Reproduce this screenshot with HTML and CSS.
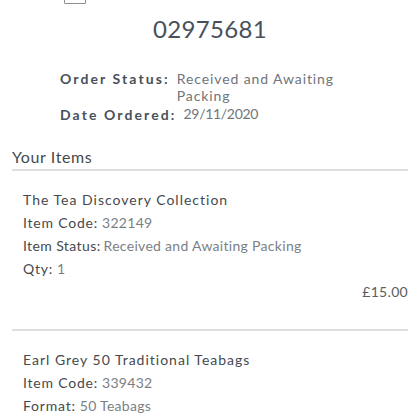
FILE: index.html
```html
<!DOCTYPE html>
<html lang="en">
<head>
    <meta charset="UTF-8">
    <meta name="viewport" content="width=device-width, initial-scale=1.0">
    <title>Order 02975681</title>
    <link rel="stylesheet" href="styles.css">
</head>
<body>

    <div class="top-box"></div>

    <h1 class="order-number">02975681</h1>

    <div class="order-info">
        <div class="info-row">
            <span class="info-label">Order Status:</span>
            <span class="info-value">Received and Awaiting Packing</span>
        </div>
        <div class="info-row">
            <span class="info-label">Date Ordered:</span>
            <span class="info-value date">29/11/2020</span>
        </div>
    </div>

    <h2 class="section-title">Your Items</h2>

    <div class="item">
        <p class="item-name">The Tea Discovery Collection</p>
        <p class="item-line"><span class="item-label">Item Code:</span> 322149</p>
        <p class="item-line"><span class="item-label tight">Item Status:</span>Received and Awaiting Packing</p>
        <p class="item-line"><span class="item-label">Qty:</span> 1</p>
        <p class="item-price">£15.00</p>
    </div>

    <div class="item">
        <p class="item-name">Earl Grey 50 Traditional Teabags</p>
        <p class="item-line"><span class="item-label">Item Code:</span> 339432</p>
        <p class="item-line"><span class="item-label">Format:</span> 50 Teabags</p>
    </div>

</body>
</html>
```

FILE: styles.css
```css
body {
    font-family: 'Lato', sans-serif;
    background-color: #ffffff;
    color: #4a4f55;
    margin: 0;
    padding: 0 12px;
}
.top-box {
    width: 20px;
    height: 20px;
    margin: -18px 0 0 52px;
    border: 1px solid #8a8f94;
    border-radius: 1px;
}
.order-number {
    margin: 10px 0 0;
    text-align: center;
    font-size: 24px;
    font-weight: 400;
    letter-spacing: 0.3px;
    color: #48515b;
}
.order-info {
    margin-top: 27px;
}
.info-row {
    display: flex;
    gap: 7px;
    margin: 0 0 2px 48px;
    line-height: 17px;
}
.info-label {
    font-weight: 700;
    font-size: 14px;
    letter-spacing: 2.1px;
    color: #48515b;
    white-space: nowrap;
}
.info-value {
    font-size: 14px;
    letter-spacing: 0.9px;
    color: #6f747a;
    max-width: 175px;
}
.info-value.date {
    letter-spacing: -0.3px;
    margin-top: -1px;
}
.section-title {
    margin: 24px 0 0;
    padding: 0 0 3px;
    font-size: 16px;
    font-weight: 400;
    letter-spacing: 0.6px;
    color: #46494d;
    border-bottom: 2px solid #dcdfe2;
}
.item {
    padding: 17px 0 0 11px;
    border-bottom: 2px solid #dcdfe2;
}
.item:last-child {
    border-bottom: none;
}
.item p {
    margin: 0;
    font-size: 14px;
    line-height: 23px;
    letter-spacing: 0.3px;
}
.item-name {
    color: #46494d;
    letter-spacing: 1px !important;
}
.item-line {
    color: #7b7f84;
}
.item-label {
    color: #46494d;
    letter-spacing: 0.8px;
}
.tight {
    margin-right: 3px;
    letter-spacing: 0.4px;
}
.item-price {
    text-align: right;
    color: #5a5e63;
    padding-bottom: 26px;
}
```
